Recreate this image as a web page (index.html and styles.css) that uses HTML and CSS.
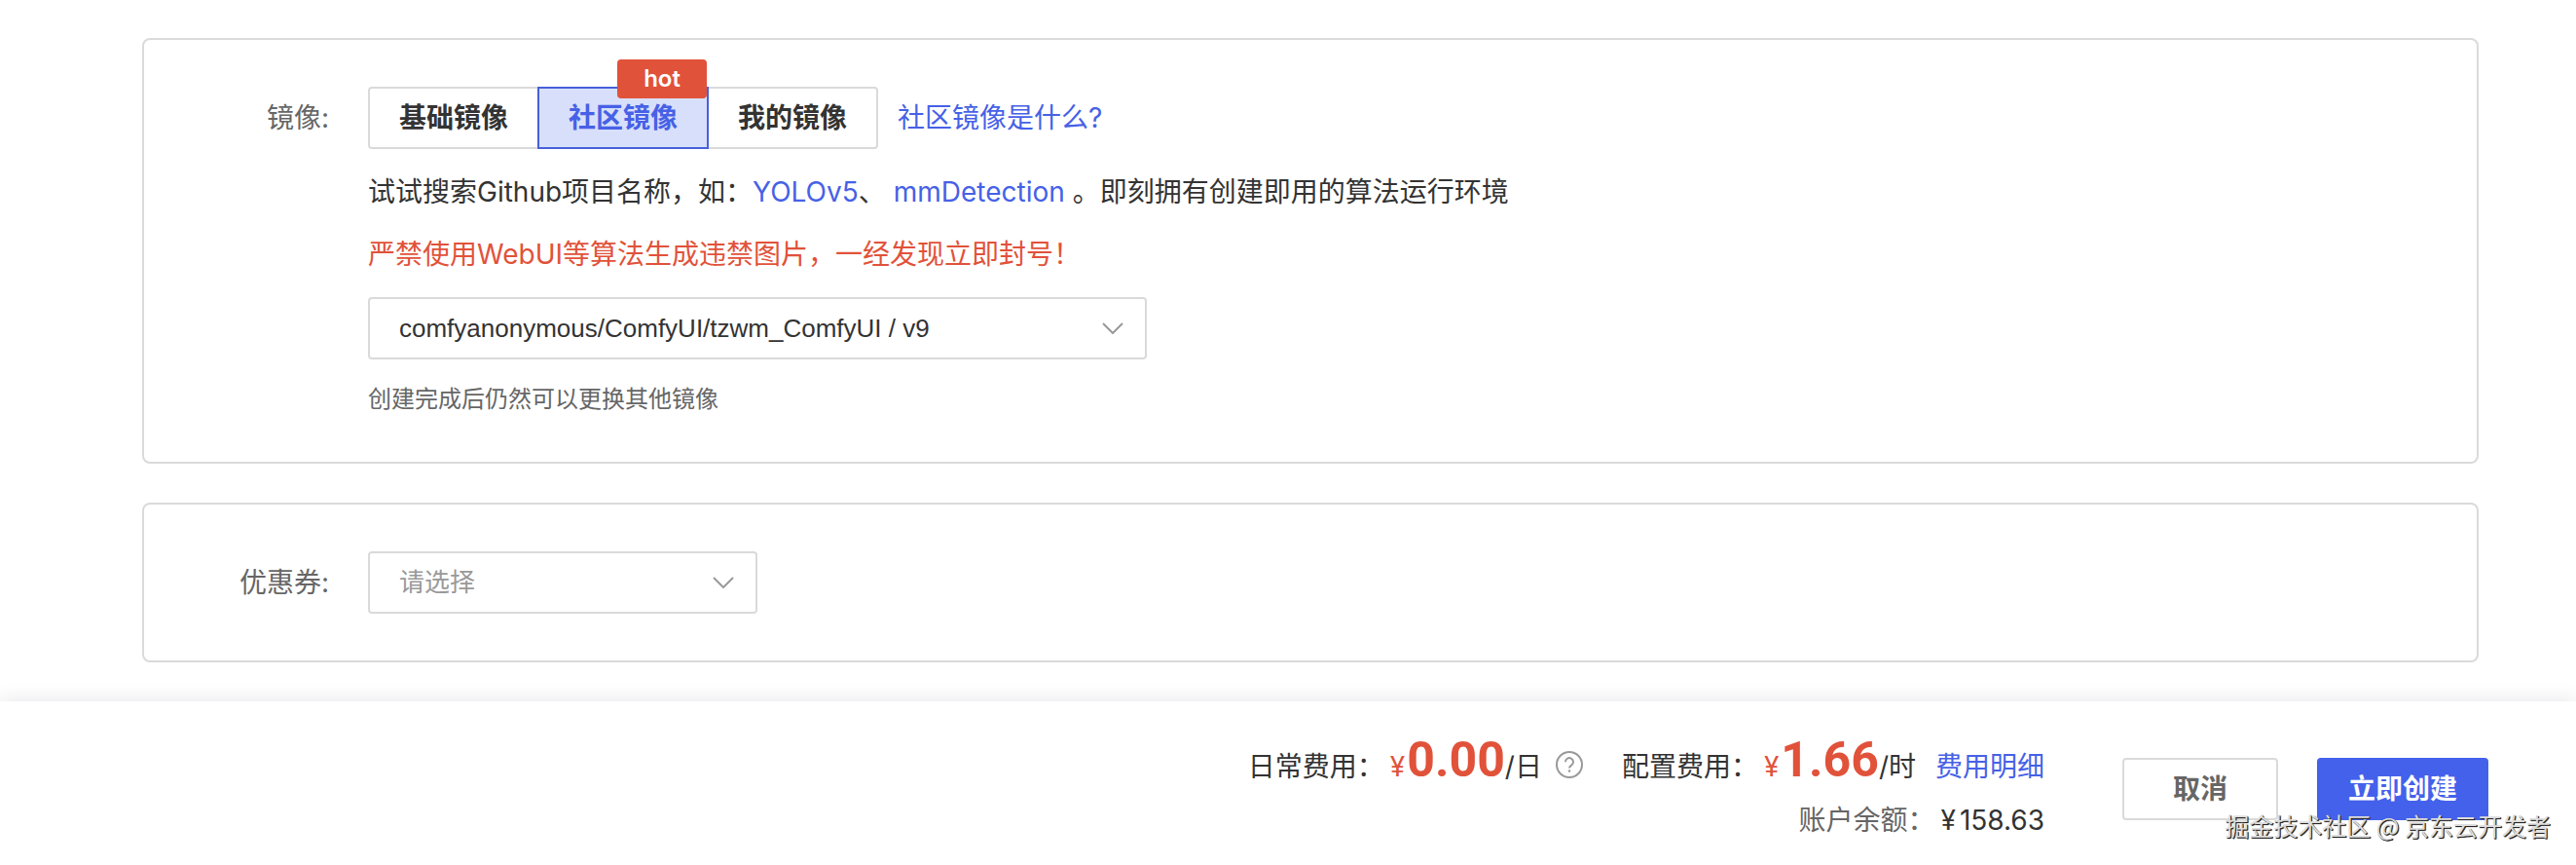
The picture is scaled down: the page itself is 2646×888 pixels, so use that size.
FILE: index.html
```html
<!DOCTYPE html>
<html lang="zh-CN">
<head>
  <meta charset="UTF-8">
  <title>创建实例</title>
  <link rel="stylesheet" href="styles.css">
</head>
<body>

  <main class="content">
    <section class="card">
      <span class="label" id="imageLabel">镜像:</span>
      <div class="field">
        <div class="image-type">
          <div class="tabs" role="group" aria-labelledby="imageLabel">
            <button type="button" class="tab">基础镜像</button>
            <button type="button" class="tab active">社区镜像<span class="hot">hot</span></button>
            <button type="button" class="tab">我的镜像</button>
          </div>
          <a href="#">社区镜像是什么?</a>
        </div>
        <p class="tip">试试搜索Github项目名称，如：<a href="#">YOLOv5</a>、 <a href="#">mmDetection</a> 。即刻拥有创建即用的算法运行环境</p>
        <p class="tip warning">严禁使用WebUI等算法生成违禁图片，一经发现立即封号！</p>
        <div class="select-box">
          <select aria-label="社区镜像">
            <option>comfyanonymous/ComfyUI/tzwm_ComfyUI / v9</option>
          </select>
          <svg class="arrow" viewBox="0 0 22 12"><path d="M1 1l10 10L21 1"/></svg>
        </div>
        <p class="hint">创建完成后仍然可以更换其他镜像</p>
      </div>
    </section>

    <section class="card">
      <label class="label" for="coupon">优惠券:</label>
      <div class="field">
        <div class="select-box small">
          <select id="coupon" class="empty">
            <option>请选择</option>
          </select>
          <svg class="arrow" viewBox="0 0 22 12"><path d="M1 1l10 10L21 1"/></svg>
        </div>
      </div>
    </section>
  </main>

  <footer class="footer">
    <div class="cost">
      <div class="cost-row">
        <span>日常费用：</span>
        <span class="yen">¥</span>
        <span class="price">0.00</span>
        <span>/日</span>
        <svg class="help" viewBox="0 0 28 28">
          <circle cx="14" cy="14" r="13"/>
          <path d="M10 11.2a4 4 0 1 1 6.3 3.2c-1.5 1-2.3 1.6-2.3 3.2"/>
          <circle class="dot" cx="14" cy="20.5" r="1.3"/>
        </svg>
        <span>配置费用：</span>
        <span class="yen">¥</span>
        <span class="price">1.66</span>
        <span>/时</span>
        <a class="detail" href="#">费用明细</a>
      </div>
      <div class="cost-row">
        <span class="balance">账户余额：</span>
        <span class="yen dark">¥</span>
        <span>158.63</span>
      </div>
    </div>
    <div class="actions">
      <button type="button" class="btn cancel">取消</button>
      <button type="button" class="btn primary">立即创建</button>
    </div>
    <span class="watermark">掘金技术社区 @ 京东云开发者</span>
  </footer>

</body>
</html>
```
FILE: styles.css
```css
* {
  box-sizing: border-box;
}

body {
  display: flex;
  flex-direction: column;
  min-height: 100vh;
  margin: 0;
  background-color: #fff;
  color: #333;
  font-family: Inter, "Noto Sans CJK SC", sans-serif;
  font-size: 28px;
  line-height: 40px;
}

p {
  margin: 0;
}

a {
  color: #4661e6;
  text-decoration: none;
}

button,
select {
  font-family: inherit;
  font-size: 28px;
}

.content {
  display: flex;
  flex-direction: column;
  gap: 40px;
  padding: 39px 100px 40px 146px;
}

.card {
  display: flex;
  gap: 40px;
  padding: 48px;
  padding-left: 0;
  border: 2px solid #dadada;
  border-radius: 8px;
}

.label {
  width: 190px;
  color: #666;
  line-height: 64px;
  text-align: right;
}

.field {
  display: flex;
  flex: 1;
  flex-direction: column;
  gap: 24px;
}

.image-type {
  display: flex;
  align-items: center;
  gap: 20px;
}

.tabs {
  display: flex;
}

.tab {
  position: relative;
  height: 64px;
  padding: 0 30px 4px;
  border: 2px solid #dadada;
  background-color: #fff;
  color: #333;
  font-weight: bold;
  cursor: pointer;
}

.tab + .tab {
  margin-left: -2px;
}

.tab:first-child {
  border-radius: 4px 0 0 4px;
}

.tab:last-child {
  border-radius: 0 4px 4px 0;
}

.tab.active {
  z-index: 1;
  border-color: #4661d9;
  background-color: #d8dffb;
  color: #4661e6;
}

.hot {
  position: absolute;
  top: -30px;
  right: 0;
  width: 92px;
  border-radius: 4px;
  background-color: #e1523a;
  color: #fff;
  font-size: 24px;
  font-weight: 600;
  line-height: 40px;
}

.warning {
  color: #e1523a;
}

.select-box {
  position: relative;
  width: 800px;
  max-width: 100%;
}

.select-box.small {
  width: 400px;
}

.select-box select {
  display: block;
  width: 100%;
  height: 64px;
  padding: 0 60px 0 30px;
  border: 2px solid #dadada;
  border-radius: 4px;
  background-color: #fff;
  color: #333;
  font-family: "Liberation Sans", "Noto Sans CJK SC", sans-serif;
  font-size: 26px;
  appearance: none;
}

.select-box select.empty {
  color: #999;
}

.arrow {
  position: absolute;
  top: 26px;
  right: 24px;
  width: 22px;
  fill: none;
  stroke: #999;
  stroke-width: 2;
  pointer-events: none;
}

.hint {
  color: #666;
  font-size: 24px;
  line-height: 33px;
}

.footer {
  position: relative;
  display: flex;
  flex: 1;
  align-items: flex-start;
  justify-content: flex-end;
  gap: 80px;
  padding: 32px 90px 0 0;
  background-color: #fff;
  box-shadow: 0 0 20px rgba(30, 30, 60, 0.12);
}

.cost {
  display: flex;
  flex-direction: column;
  align-items: flex-end;
  gap: 6px;
}

.cost-row {
  display: flex;
  align-items: baseline;
  height: 56px;
  line-height: 56px;
}

.yen {
  margin-left: 6px;
  color: #e1523a;
}

.yen.dark {
  margin-right: 4px;
  color: #333;
}

.price {
  margin-left: 2px;
  color: #e1523a;
  font-family: Roboto, sans-serif;
  font-size: 50px;
  font-weight: bold;
}

.help {
  align-self: center;
  width: 28px;
  margin: 10px 40px 0 14px;
  fill: none;
  stroke: #999;
  stroke-width: 2;
}

.help .dot {
  fill: #999;
  stroke: none;
}

.detail {
  margin-left: 20px;
}

.balance {
  color: #666;
}

.actions {
  display: flex;
  gap: 40px;
  padding-top: 26px;
}

.btn {
  height: 64px;
  padding: 0 0 4px;
  border: 2px solid #dadada;
  border-radius: 4px;
  background-color: #fff;
  font-weight: bold;
  cursor: pointer;
}

.cancel {
  width: 160px;
  color: #666;
}

.primary {
  width: 176px;
  border-color: #4461eb;
  background-color: #4461eb;
  color: #fff;
}

.watermark {
  position: absolute;
  right: 26px;
  bottom: 21px;
  color: #ddd;
  font-family: "Noto Sans CJK SC", sans-serif;
  font-size: 25px;
  text-shadow: 1px 1px 1px #222, 1px 1px 0 #444;
}
```
